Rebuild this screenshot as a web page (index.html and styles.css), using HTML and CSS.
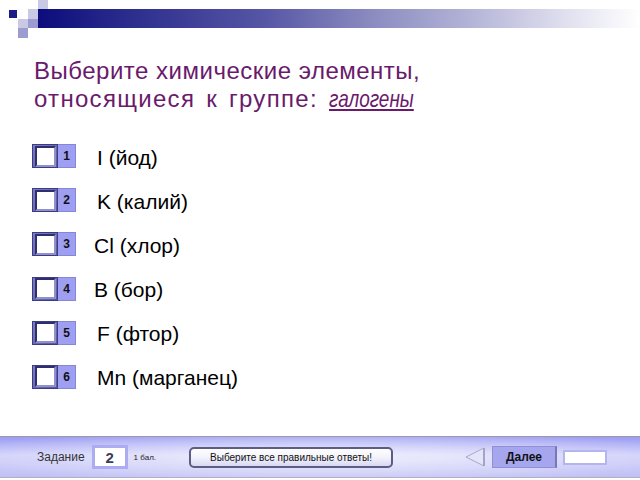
FILE: index.html
```html
<!DOCTYPE html>
<html lang="ru">
<head>
  <meta charset="UTF-8" />
  <title>Тест - галогены</title>
  <link rel="stylesheet" href="styles.css">
</head>
<body>
  <div class="page">

    <header class="shapka">
      <span class="kv kv-dark k-a"></span>
      <span class="kv kv-light k-b"></span>
      <span class="kv kv-light k-c"></span>
      <span class="kv kv-light k-d"></span>
      <span class="kv kv-mid k-e"></span>
      <span class="kv kv-mid k-f"></span>
      <span class="polosa"></span>
    </header>

    <h1 class="vopros">
      <span class="stroka stroka-1">Выберите химические элементы,</span>
      <span class="stroka stroka-2">относящиеся к группе: <em>галогены</em></span>
    </h1>

    <ul class="otvety">
      <li class="otvet">
        <span class="galka"><span class="galka-box"></span><span class="galka-num">1</span></span>
        <span class="tekst">I (йод)</span>
      </li>
      <li class="otvet">
        <span class="galka"><span class="galka-box"></span><span class="galka-num">2</span></span>
        <span class="tekst">K (калий)</span>
      </li>
      <li class="otvet">
        <span class="galka"><span class="galka-box"></span><span class="galka-num">3</span></span>
        <span class="tekst tekst-left">Cl (хлор)</span>
      </li>
      <li class="otvet">
        <span class="galka"><span class="galka-box"></span><span class="galka-num">4</span></span>
        <span class="tekst tekst-left">B (бор)</span>
      </li>
      <li class="otvet">
        <span class="galka"><span class="galka-box"></span><span class="galka-num">5</span></span>
        <span class="tekst">F (фтор)</span>
      </li>
      <li class="otvet">
        <span class="galka"><span class="galka-box"></span><span class="galka-num">6</span></span>
        <span class="tekst">Mn (марганец)</span>
      </li>
    </ul>

    <footer class="podval">
      <span class="zadanie">Задание</span>
      <span class="nomer">2</span>
      <span class="ball">1 бал.</span>
      <button class="podskazka">Выберите все правильные ответы!</button>
      <span class="strelka">
        <svg width="20" height="20" viewBox="0 0 20 20">
          <polygon points="19,1 1,10 19,19" fill="#e4e4fa" stroke="#a8a8c8" stroke-width="1"/>
          <line x1="19" y1="1" x2="19" y2="19" stroke="#9a9ab8" stroke-width="1.5"/>
        </svg>
      </span>
      <button class="dalee">Далее</button>
      <span class="pole"></span>
    </footer>

  </div>
</body>
</html>
```

FILE: styles.css
```css
* { box-sizing: border-box; margin: 0; padding: 0; }

body {
  font-family: "Liberation Sans", Arial, sans-serif;
  background: white;
  color: #000;
}

.page {
  width: 640px;
  height: 480px;
  display: flex;
  flex-direction: column;
  overflow: hidden;
}

/* Верхняя полоса с квадратиками */
.shapka {
  display: grid;
  grid-template-columns: 8px 10px 10px 10px 10px 1fr;
  grid-template-rows: 9px 10px 9px 10px;
  height: 38px;
}

.kv { display: block; }
.kv-dark { background: #1c1c86; margin: 1px; }
.kv-light { background: #c9c9e6; }
.kv-mid { background: #9c9cd0; }

.k-a { grid-column: 2; grid-row: 2; }
.k-b { grid-column: 4; grid-row: 2; }
.k-c { grid-column: 5; grid-row: 1; }
.k-d { grid-column: 3; grid-row: 3; }
.k-e { grid-column: 4; grid-row: 3; }
.k-f { grid-column: 3; grid-row: 4; }

.polosa {
  grid-column: 5 / 7;
  grid-row: 2 / 4;
  background: linear-gradient(to right, #0c0c7c 0%, #2a2a8c 14%, #5757a6 38%, #8a8ac0 55%, #b4b4d8 72%, #e6e6f2 90%, #ffffff 100%);
}

/* Вопрос */
.vopros {
  margin: 19px 0 0 34px;
  font-size: 24px;
  line-height: 28px;
  font-weight: normal;
  color: #6a1a6c;
}

.stroka { display: block; white-space: nowrap; }
.stroka-1 { letter-spacing: 0.5px; }
.stroka-2 { letter-spacing: 1.3px; word-spacing: 3px; }

.vopros em {
  display: inline-block;
  letter-spacing: 0;
  transform: scaleX(0.79);
  transform-origin: left center;
  text-decoration: underline;
  text-underline-offset: 2px;
}

/* Варианты ответов */
.otvety {
  list-style: none;
  margin: 31px 0 0 32px;
  display: flex;
  flex-direction: column;
  gap: 20.2px;
}

.otvet {
  display: flex;
  align-items: center;
  height: 24px;
}

.galka {
  display: flex;
  height: 24px;
  width: 44px;
}

.galka-box {
  width: 26px;
  height: 24px;
  background: linear-gradient(135deg, #7c7cc4, #5a5aa4);
  border: 1px solid #3c3c82;
  display: flex;
  align-items: center;
  justify-content: center;
}

.galka-box::before {
  content: "";
  width: 17px;
  height: 17px;
  background: white;
  border: 2px solid #2e2e70;
  border-right-color: #9090cc;
  border-bottom-color: #9090cc;
}

.galka-num {
  width: 18px;
  height: 24px;
  background: #9e9ef2;
  border: 1px solid #8686d6;
  border-left: none;
  font-size: 12px;
  font-weight: bold;
  color: #111;
  display: flex;
  align-items: center;
  justify-content: center;
}

.tekst {
  margin-left: 21px;
  font-size: 21px;
  padding-top: 3px;
}

.tekst-left { margin-left: 18px; }

/* Нижняя панель */
.podval {
  margin-top: auto;
  margin-bottom: 2px;
  height: 42px;
  border-top: 1px solid #9a9aa8;
  border-bottom: 1px solid #b0b0c0;
  background:
    radial-gradient(ellipse 60% 70% at 50% 50%, rgba(255,255,255,0.7), rgba(255,255,255,0) 100%),
    linear-gradient(to bottom, #9c9cf4 0%, #d0d0fa 45%, #c0c0f6 100%);
  display: flex;
  align-items: center;
  padding-left: 37px;
}

.zadanie {
  font-size: 12px;
  color: #333;
}

.nomer {
  margin-left: 7px;
  width: 36px;
  height: 24px;
  background: white;
  border: 3px solid #acacf0;
  font-size: 15px;
  font-weight: bold;
  color: #3c3c58;
  display: flex;
  align-items: center;
  justify-content: center;
}

.ball {
  margin-left: 6px;
  font-size: 8px;
  color: #222;
}

.podskazka {
  margin-left: 33px;
  width: 204px;
  height: 21px;
  border: 2px solid #5c5c84;
  border-radius: 5px;
  background: linear-gradient(to bottom, #ffffff 0%, #f2f2fc 50%, #d8d8f4 100%);
  font-family: "Liberation Sans", Arial, sans-serif;
  font-size: 10px;
  color: #111;
}

.strelka {
  margin-left: 72px;
  width: 20px;
  height: 20px;
  display: flex;
}

.dalee {
  margin-left: 7px;
  width: 65px;
  height: 22px;
  background: #a6a6ee;
  border: 1px solid #9090d4;
  border-right: 2px solid #7878b8;
  font-family: "Liberation Sans", Arial, sans-serif;
  font-size: 12px;
  font-weight: bold;
  color: #111;
}

.pole {
  margin-left: 6px;
  width: 44px;
  height: 15px;
  background: white;
  border: 2px solid #b4b4ee;
}
```
